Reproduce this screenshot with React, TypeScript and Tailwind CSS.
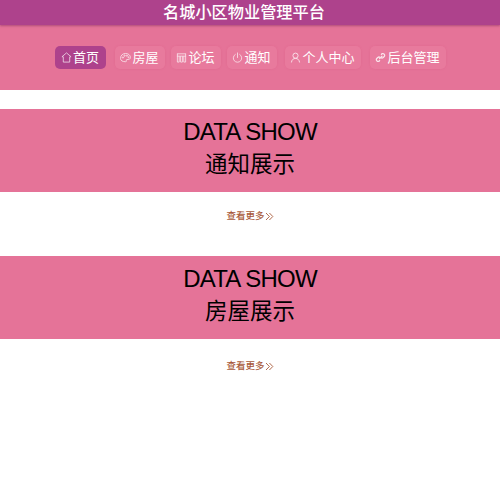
import type { ReactNode } from "react";

const FONT = "font-['Liberation_Sans','Noto_Sans_CJK_SC',sans-serif]";

/* nav icons, thin outline glyphs on an 11px box */
const iconProps = {
  width: 11,
  height: 11,
  viewBox: "0 0 12 12",
  fill: "none",
  stroke: "currentColor",
  strokeWidth: 0.9,
};

const HomeIcon = () => (
  <svg {...iconProps}>
    <path d="M6 1 L11 5.2 L9.5 5.2 L9.5 11 L2.5 11 L2.5 5.2 L1 5.2 Z" strokeLinejoin="round" />
  </svg>
);
const PaletteIcon = () => (
  <svg {...iconProps}>
    <path d="M0.6 7 C0.6 3.4 3.2 1.6 6.2 1.6 C9.2 1.6 11.4 3.6 11.4 6 C11.4 7.4 10.2 8.2 8.8 8.2 L7.6 8.2 C6.8 8.2 6.6 8.9 7 9.5 C7.3 10.1 6.8 10.6 6 10.6 C2.8 10.6 0.6 9.5 0.6 7 Z" />
    <circle cx="3.2" cy="6" r="0.7" />
    <circle cx="5" cy="4" r="0.7" />
    <circle cx="7.6" cy="4" r="0.7" />
    <circle cx="9.4" cy="5.8" r="0.6" />
  </svg>
);
const ForumIcon = () => (
  <svg {...iconProps}>
    <path d="M1 2 H11 M1 4.5 H11 M1.5 2 V11 M3.5 4.5 V11 M5 4.5 V11 M7 4.5 V11 M8.5 4.5 V11 M10.5 2 V11 M1.5 11 H3.5 M5 11 H7 M8.5 11 H10.5" />
  </svg>
);
const PowerIcon = () => (
  <svg {...iconProps}>
    <path d="M3.6 2.6 A4.6 4.6 0 1 0 8.4 2.6" strokeLinecap="round" />
    <path d="M6 1 V6" strokeLinecap="round" />
  </svg>
);
const UserIcon = () => (
  <svg {...iconProps} strokeWidth={1}>
    <circle cx="6" cy="4" r="2.8" />
    <path d="M1.6 11 C2 8.4 3.6 7 6 7 C8.4 7 10 8.4 10.4 11" strokeLinecap="round" />
  </svg>
);
const LinkIcon = () => (
  <svg {...iconProps} strokeWidth={1.4}>
    <path d="M5 7.2 L7.6 4.6" strokeLinecap="round" />
    <path d="M6.6 3 L7.8 1.8 A2.1 2.1 0 0 1 10.4 4.6 L9 6 A2.1 2.1 0 0 1 6.4 6" />
    <path d="M5.4 9 L4.2 10.2 A2.1 2.1 0 0 1 1.6 7.4 L3 6 A2.1 2.1 0 0 1 5.6 6" />
  </svg>
);

const NAV: { label: string; icon: ReactNode; className: string; active?: boolean }[] = [
  { label: "首页", icon: <HomeIcon />, active: true, className: "w-[51px]" },
  { label: "房屋", icon: <PaletteIcon />, className: "w-[50px] ml-[3px]" },
  { label: "论坛", icon: <ForumIcon />, className: "w-[50px]" },
  { label: "通知", icon: <PowerIcon />, className: "w-[50px]" },
  { label: "个人中心", icon: <UserIcon />, className: "w-[76px] ml-[2px]" },
  { label: "后台管理", icon: <LinkIcon />, className: "w-[76px] ml-[3px]" },
];

function Section({ title, linkClass }: { title: string; linkClass: string }) {
  return (
    <section>
      <div className="h-[83px] bg-[#e57398] flex flex-col items-center justify-center pb-[6px] text-black text-[22.5px] leading-[33px]">
        <div className="text-[24px] tracking-[-0.75px]">DATA SHOW</div>
        <div>{title}</div>
      </div>
      <div className={`h-[64px] flex justify-center ${linkClass}`}>
        <div className="h-[14px] flex items-center text-[9.5px] font-medium text-[#a85a3a]">
          查看更多
          <svg width="9" height="9" viewBox="0 0 9 9" fill="none" stroke="#a85a3a" strokeWidth="0.9">
            <path d="M1 1 L4.4 4.5 L1 8 M4.4 1 L7.8 4.5 L4.4 8" />
          </svg>
        </div>
      </div>
    </section>
  );
}

export default function App() {
  return (
    <div className={`${FONT} w-[500px] h-[500px] bg-white overflow-hidden`}>
      <header className="h-[25px] pr-[12px] bg-[#ae428c] shadow-[0_1px_2px_rgba(120,40,90,0.5)] relative text-white text-[16.2px] font-medium flex items-center justify-center">
        名城小区物业管理平台
      </header>
      <nav className="h-[65px] bg-[#e57398] flex items-center justify-center gap-[6px] text-white text-[13px]">
        {NAV.map((n) => (
          <div
            key={n.label}
            className={`h-[23px] rounded-[5px] flex items-center justify-center ${n.className} ${
              n.active ? "bg-[#ae428c]" : "bg-[#e87c9f]/80 shadow-[0_0_2px_rgba(220,90,130,0.4)]"
            }`}
          >
            <span className="opacity-80 mr-[1px]">{n.icon}</span>
            <span>{n.label}</span>
          </div>
        ))}
      </nav>
      <div className="h-[19px]" />
      <Section title="通知展示" linkClass="pt-[17px]" />
      <Section title="房屋展示" linkClass="pt-[20px]" />
    </div>
  );
}
